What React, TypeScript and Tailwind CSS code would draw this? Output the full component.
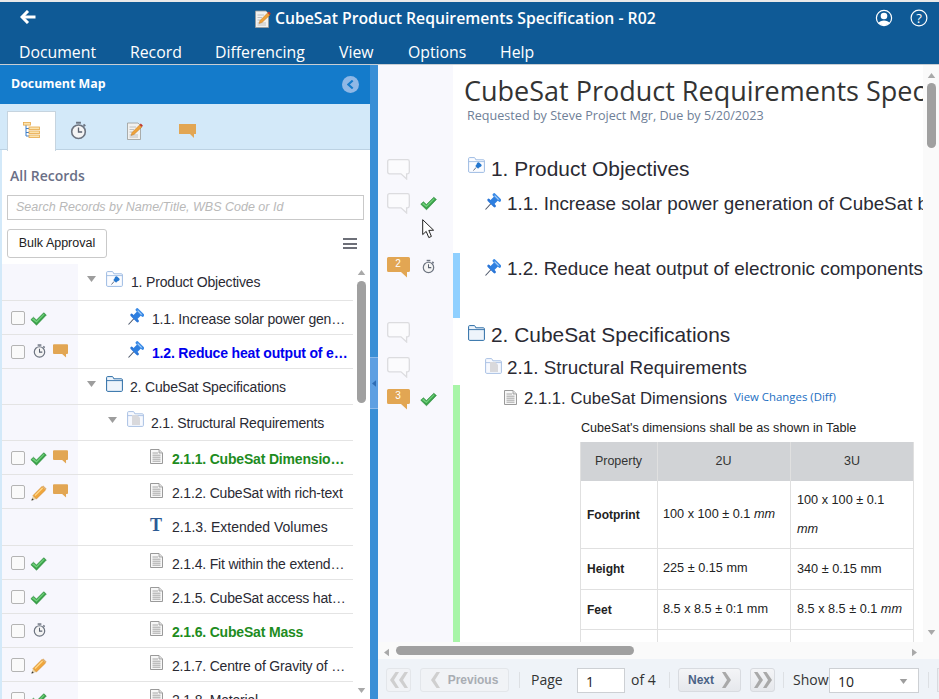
import React from "react";

const Check = ({ className = "" }: { className?: string }) => (
  <svg viewBox="0 0 18 15" className={className}>
    <path d="M0.8 8.2 L3.6 5.6 L6.8 8.6 L14.6 0.8 L17.4 3.2 L6.9 14.2 Z" fill="#3ba24a" stroke="#2b8a3c" strokeWidth="0.6" />
    <path d="M2 8 L3.6 6.6 L6.8 9.6 L14.6 2 L15.5 2.8 L6.9 11.5 Z" fill="#6fcf7a" />
  </svg>
);

const Stopwatch = ({ className = "" }: { className?: string }) => (
  <svg viewBox="0 0 14 15" className={className}>
    <rect x="5" y="0.3" width="4" height="1.6" fill="#6d7480" />
    <rect x="11" y="2.5" width="2" height="1.5" fill="#6d7480" transform="rotate(40 12 3)" />
    <circle cx="7" cy="8.5" r="5.6" fill="#f4f4f4" stroke="#6d7480" strokeWidth="1.3" />
    <path d="M7 5 V8.7 H10" fill="none" stroke="#5a6270" strokeWidth="1.1" />
  </svg>
);

const Comment = ({ className = "", n }: { className?: string; n?: string }) => (
  <div className={className}>
    <svg viewBox="0 0 23 21" className="absolute inset-0 w-full h-full">
      <path d="M1.5 0 H21.5 Q23 0 23 1.5 V13.5 Q23 15 21.5 15 H20 V20.5 L14 15 H1.5 Q0 15 0 13.5 V1.5 Q0 0 1.5 0 Z" fill="#e2a653" />
    </svg>
    {n && (
      <span className="absolute left-0 right-[1px] top-[1px] text-center text-[10px] leading-[12px] text-white">
        {n}
      </span>
    )}
  </div>
);

const EmptyComment = ({ className = "" }: { className?: string }) => (
  <svg viewBox="0 0 23 21" className={className}>
    <path d="M2.5 0.7 H20.5 Q22.3 0.7 22.3 2.5 V13 Q22.3 14.8 20.5 14.8 H19.6 V20 L14 14.8 H2.5 Q0.7 14.8 0.7 13 V2.5 Q0.7 0.7 2.5 0.7 Z" fill="#fbfbfd" stroke="#dcdcdf" strokeWidth="1.3" />
  </svg>
);

const Pin = ({ className = "" }: { className?: string }) => (
  <svg viewBox="0 0 16 17" className={className}>
    <path d="M0.5 16.5 L6 10.5" stroke="#4a5568" strokeWidth="1.1" />
    <path d="M3.6 7 L9.6 13" stroke="#2a75d6" strokeWidth="2.6" strokeLinecap="round" />
    <path d="M6 10.5 L11.5 5" stroke="#2e7fe0" strokeWidth="5.4" />
    <path d="M9.2 1.8 L14.6 7.2" stroke="#3a8ae6" strokeWidth="3.2" strokeLinecap="round" />
    <path d="M9.6 2.6 L13.6 6.6" stroke="#a5cdf7" strokeWidth="1.1" />
  </svg>
);

const FolderOutline = ({ className = "", color = "#2c6da6", fill = "#eef4fb" }: { className?: string; color?: string; fill?: string }) => (
  <svg viewBox="0 0 17 16" className={className}>
    <path d="M0.6 14 V1.6 Q0.6 0.6 1.6 0.6 H6 Q7 0.6 7.4 1.6 L7.8 2.8 H15.4 Q16.4 2.8 16.4 3.8 V14.4 Q16.4 15.4 15.4 15.4 H1.6 Q0.6 15.4 0.6 14 Z" fill={fill} stroke={color} strokeWidth="1" />
    <path d="M0.8 4.6 H16.2" stroke={color} strokeWidth="0.9" />
  </svg>
);

const PinFolder = ({ className = "" }: { className?: string }) => (
  <div className={className}>
    <FolderOutline className="absolute inset-0 w-full h-full" color="#9dbbe3" fill="#fbfcff" />
    <svg viewBox="0 0 10 10" className="absolute left-[5px] top-[5px] w-[9px] h-[9px]">
      <path d="M0.5 9.5 L3.5 6" stroke="#44526a" strokeWidth="0.9" />
      <path d="M4.5 1 C5.5 0 6.6 0 7.4 1 L9 2.6 C10 3.6 9.7 4.6 8.9 5 L6.5 6.4 L5.7 7.5 L2.5 4.4 L3.6 3.4 Z" fill="#2477cf" />
    </svg>
  </div>
);

const DocFolder = ({ className = "" }: { className?: string }) => (
  <div className={className}>
    <FolderOutline className="absolute inset-0 w-full h-full" color="#a9c1e4" fill="#f7f9fe" />
    <svg viewBox="0 0 9 11" className="absolute left-[5px] top-[4px] w-[8px] h-[10px]">
      <path d="M0 0 H6 L9 3 V11 H0 Z" fill="#d9d9dc" />
    </svg>
  </div>
);

const Doc = ({ className = "" }: { className?: string }) => (
  <svg viewBox="0 0 13 15" className={className}>
    <path d="M0.5 0.5 H9 L12.5 4 V14.5 H0.5 Z" fill="#f7f7f7" stroke="#9a9a9a" strokeWidth="1" />
    <path d="M9 0.5 V4 H12.5" fill="#dcdcdc" stroke="#9a9a9a" strokeWidth="0.8" />
    <path d="M2.5 4 H8 M2.5 6.2 H10.5 M2.5 8.2 H10.5 M2.5 10.2 H10.5 M2.5 12.2 H10.5" stroke="#9c9c9c" strokeWidth="0.9" />
  </svg>
);

const Pencil = ({ className = "" }: { className?: string }) => (
  <svg viewBox="0 0 16 16" className={className}>
    <path d="M0.4 15.6 L2 10.5 L5.4 14 Z" fill="#e8d3a8" />
    <path d="M0.4 15.6 L1.1 13.2 L2.8 14.9 Z" fill="#333" />
    <path d="M2 10.5 L11 1.4 L14.6 5 L5.4 14 Z" fill="#f0a63c" stroke="#c67f1e" strokeWidth="0.5" />
    <path d="M4 10.5 L11.6 3" stroke="#ffd98c" strokeWidth="1.2" />
    <path d="M11 1.4 L12.2 0.4 L15.6 3.8 L14.6 5 Z" fill="#e0b070" />
  </svg>
);

const NoteIcon = ({ className = "" }: { className?: string }) => (
  <svg viewBox="0 0 16 18" className={className}>
    <path d="M0.5 1 H11 L13.5 3.5 V17.5 H0.5 Z" fill="#f1f1ef" stroke="#9a9a98" strokeWidth="0.8" />
    <path d="M2.5 5 H9 M2.5 7.5 H7 M2.5 10 H5.5 M2.5 13 H11 M2.5 15 H11" stroke="#b5b5b5" strokeWidth="0.8" />
    <path d="M4 13.5 L5 10.5 L12.5 3 L15 5 L7 12.5 Z" fill="#eea23a" stroke="#b86f1a" strokeWidth="0.4" />
    <path d="M12.5 3 L13.8 1.6 L15.8 3.6 L15 5 Z" fill="#c0392b" />
  </svg>
);

const Tri = ({ className = "" }: { className?: string }) => (
  <svg viewBox="0 0 9 6" className={className}>
    <path d="M0 0 H9 L4.5 6 Z" fill="#9d9d9d" />
  </svg>
);

const Checkbox = () => (
  <div className="w-[14px] h-[14px] rounded-[2px] border border-[#b4b4b4] bg-[#fafafa] shrink-0" />
);

type Row = {
  top: number;
  h: number;
  text: string;
  textX: number;
  cb?: boolean;
  status?: "check" | "watch" | "pencil";
  comment?: boolean;
  tone?: "blue" | "green";
  icon: "pinfolder" | "folder" | "docfolder" | "pin" | "doc" | "t";
  iconX: number;
  iconY: number;
  arrowX?: number;
  wide?: boolean;
};

const rows: Row[] = [
  { top: 264, h: 37, text: "1. Product Objectives", textX: 131, icon: "pinfolder", iconX: 106, iconY: 7, arrowX: 87 },
  { top: 301, h: 34, text: "1.1. Increase solar power gen…", textX: 152, cb: true, status: "check", icon: "pin", iconX: 128, iconY: 7 },
  { top: 335, h: 34, text: "1.2. Reduce heat output of e…", textX: 152, cb: true, status: "watch", comment: true, tone: "blue", icon: "pin", iconX: 128, iconY: 6 },
  { top: 369, h: 36, text: "2. CubeSat Specifications", textX: 130, icon: "folder", iconX: 106, iconY: 7, arrowX: 87 },
  { top: 405, h: 36, text: "2.1. Structural Requirements", textX: 151, icon: "docfolder", iconX: 127, iconY: 6, arrowX: 108 },
  { top: 441, h: 34, text: "2.1.1. CubeSat Dimensio…", textX: 172, cb: true, status: "check", comment: true, tone: "green", icon: "doc", iconX: 150, iconY: 8 },
  { top: 475, h: 34, text: "2.1.2. CubeSat with rich-text", textX: 172, cb: true, status: "pencil", comment: true, icon: "doc", iconX: 150, iconY: 8 },
  { top: 509, h: 37, text: "2.1.3. Extended Volumes", textX: 172, icon: "t", iconX: 150, iconY: 8, wide: true },
  { top: 546, h: 34, text: "2.1.4. Fit within the extend…", textX: 172, cb: true, status: "check", icon: "doc", iconX: 150, iconY: 7 },
  { top: 580, h: 34, text: "2.1.5. CubeSat access hat…", textX: 172, cb: true, status: "check", icon: "doc", iconX: 150, iconY: 7 },
  { top: 614, h: 34, text: "2.1.6. CubeSat Mass", textX: 172, cb: true, status: "watch", tone: "green", icon: "doc", iconX: 150, iconY: 7 },
  { top: 648, h: 34, text: "2.1.7. Centre of Gravity of …", textX: 172, cb: true, status: "pencil", icon: "doc", iconX: 150, iconY: 7 },
  { top: 682, h: 34, text: "2.1.8. Material", textX: 172, cb: true, status: "check", icon: "doc", iconX: 150, iconY: 7 },
];

function TreeRow({ r }: { r: Row }) {
  const toneClass =
    r.tone === "blue" ? "font-bold text-[#0000ee]" : r.tone === "green" ? "font-bold text-[#1e8c1e]" : "text-[#2a2a33]";
  return (
    <div className="absolute left-[2px] w-[351px] border-b border-[#e4e4e4] bg-white" style={{ top: r.top, height: r.h }}>
      <div className="absolute left-0 top-0 bottom-0 w-[76px] bg-[#f7f7fd]" />
      {r.cb && (
        <div className="absolute left-[9px] top-[10px]">
          <Checkbox />
        </div>
      )}
      {r.status === "check" && <Check className="absolute left-[28px] top-[11px] w-[17px] h-[14px]" />}
      {r.status === "watch" && <Stopwatch className="absolute left-[31px] top-[9px] w-[13px] h-[14px]" />}
      {r.status === "pencil" && <Pencil className="absolute left-[29px] top-[10px] w-[16px] h-[16px]" />}
      {r.comment && <Comment className="absolute left-[51px] top-[9px] w-[15px] h-[14px]" />}
      {r.arrowX !== undefined && (
        <div className="absolute top-[12px]" style={{ left: r.arrowX - 2 }}>
          <Tri className="block w-[9px] h-[6px]" />
        </div>
      )}
      <div className="absolute" style={{ left: r.iconX - 2, top: r.iconY }}>
        {r.icon === "pinfolder" && <PinFolder className="relative w-[17px] h-[16px]" />}
        {r.icon === "folder" && <FolderOutline className="w-[17px] h-[16px]" />}
        {r.icon === "docfolder" && <DocFolder className="relative w-[17px] h-[16px]" />}
        {r.icon === "pin" && <Pin className="w-[16px] h-[17px]" />}
        {r.icon === "doc" && <Doc className="w-[13px] h-[15px]" />}
        {r.icon === "t" && (
          <span className="block w-[13px] text-[18px] leading-[17px] font-bold text-[#2c5a94] font-[Liberation_Serif,serif]">T</span>
        )}
      </div>
      <span
        className={`absolute top-[10px] text-[14px] leading-[17px] whitespace-nowrap ${r.wide ? "" : "tracking-[-0.18px]"} ${toneClass}`}
        style={{ left: r.textX - 2 }}
      >
        {r.text}
      </span>
    </div>
  );
}

const menu = [
  ["Document", 19],
  ["Record", 130],
  ["Differencing", 215],
  ["View", 339],
  ["Options", 408],
  ["Help", 500],
] as const;

const tableRows = [
  { top: 481, h: 68, a: "Footprint", b: <>100 x 100 ± 0.1 <i>mm</i></>, c: <>100 x 100 ± 0.1<br /><i>mm</i></> },
  { top: 549, h: 41, a: "Height", b: <>225 ± 0.15 mm</>, c: <>340 ± 0.15 mm</> },
  { top: 590, h: 40, a: "Feet", b: <>8.5 x 8.5 ± 0:1 mm</>, c: <>8.5 x 8.5 ± 0.1 <i>mm</i></> },
];

const NavBtn = ({ className = "", children, dim }: { className?: string; children: React.ReactNode; dim?: boolean }) => (
  <div
    className={`absolute top-[668px] h-[24px] rounded-[3px] border flex items-center justify-center ${
      dim ? "border-[#e3e6ea] bg-[#f1f3f6]" : "border-[#d8dbe0] bg-gradient-to-b from-[#f4f5f7] to-[#e6e8ec]"
    } ${className}`}
  >
    {children}
  </div>
);

const Chev = ({ dir, double, color, className = "" }: { dir: "l" | "r"; double?: boolean; color: string; className?: string }) => (
  <svg viewBox={double ? "0 0 20 16" : "0 0 10 16"} className={className}>
    <g transform={dir === "l" ? (double ? "translate(20 0) scale(-1 1)" : "translate(10 0) scale(-1 1)") : undefined}>
      <path d="M1 0 H4.5 L10 8 L4.5 16 H1 L6 8 Z" fill={color} />
      {double && <path d="M10 0 H13.5 L19 8 L13.5 16 H10 L15 8 Z" fill={color} />}
    </g>
  </svg>
);

export default function App() {
  return (
    <div className="relative w-[939px] h-[699px] overflow-hidden bg-white font-[Liberation_Sans,Arial,sans-serif]">
      {/* Header */}
      <div className="absolute left-0 top-0 w-full h-[65px] bg-[#0f5a96] border-t-2 border-t-[#e9e9e9] border-b border-b-[#c9ced3] font-[Open_Sans,sans-serif] text-white">
        <svg viewBox="0 0 16 14" className="absolute left-[20px] top-[8px] w-[16px] h-[14px]">
          <path d="M2 7 H15.5" stroke="#fff" strokeWidth="3" />
          <path d="M8 1 L2 7 L8 13" stroke="#fff" strokeWidth="3" fill="none" />
        </svg>
        <NoteIcon className="absolute left-[255px] top-[8px] w-[16px] h-[18px]" />
        <span className="absolute left-[275px] top-[5px] text-[15.75px] leading-[22px] font-semibold whitespace-nowrap">
          CubeSat Product Requirements Specification - R02
        </span>
        <svg viewBox="0 0 18 18" className="absolute left-[875px] top-[7px] w-[18px] h-[18px]">
          <circle cx="9" cy="9" r="7.6" fill="none" stroke="#fff" strokeWidth="1.2" />
          <circle cx="9" cy="7" r="3.3" fill="#fff" />
          <path d="M3.4 14 C5 10.5 13 10.5 14.6 14 C12 17 6 17 3.4 14 Z" fill="#fff" />
        </svg>
        <svg viewBox="0 0 18 18" className="absolute left-[910px] top-[7px] w-[18px] h-[18px]">
          <circle cx="9" cy="9" r="7.9" fill="none" stroke="#fff" strokeWidth="1.2" />
          <text x="9" y="13.5" textAnchor="middle" fontSize="13" fill="#fff" fontFamily="Open Sans">?</text>
        </svg>
        {menu.map(([t, x]) => (
          <span key={t} className="absolute top-[38px] text-[15.8px] leading-[24px] whitespace-nowrap" style={{ left: x }}>
            {t}
          </span>
        ))}
      </div>

      {/* Left panel */}
      <div className="absolute left-0 top-[65px] w-[370px] h-[39px] bg-[#147bcb] flex items-center justify-between pl-[11px] pr-[11px]">
        <span className="text-[12.4px] font-bold text-white font-[Open_Sans,sans-serif]">Document Map</span>
        <div className="w-[17px] h-[17px] rounded-full bg-[#8fb8e6] flex items-center justify-center">
          <svg viewBox="0 0 8 10" className="w-[7px] h-[9px]">
            <path d="M6.5 0.5 L1.5 5 L6.5 9.5" fill="none" stroke="#147bcb" strokeWidth="2.4" />
          </svg>
        </div>
      </div>
      <div className="absolute left-0 top-[104px] w-[370px] h-[46px] bg-[#d3e9f9] border-b border-[#bcd2e3]" />
      <div className="absolute left-0 top-[150px] bottom-0 w-[2px] bg-[#d3e9f9]" />
      <div className="absolute left-[7px] top-[111px] w-[49px] h-[40px] bg-white border border-b-0 border-[#c6d4df]" />
      <svg viewBox="0 0 17 17" className="absolute left-[23px] top-[122px] w-[17px] h-[17px]">
        <path d="M3 2 V14 H6 M3 6.5 H6 M3 10.5 H6" fill="none" stroke="#3a7cc9" strokeWidth="1" />
        <rect x="0.5" y="0.5" width="7" height="2.6" fill="#fbe3ae" stroke="#e6a84a" strokeWidth="0.8" />
        <rect x="6" y="5" width="10.5" height="2.6" fill="#fbe3ae" stroke="#e6a84a" strokeWidth="0.8" />
        <rect x="6" y="9" width="10.5" height="2.6" fill="#fbe3ae" stroke="#e6a84a" strokeWidth="0.8" />
        <rect x="6" y="13" width="10.5" height="2.6" fill="#fbe3ae" stroke="#e6a84a" strokeWidth="0.8" />
      </svg>
      <Stopwatch className="absolute left-[70px] top-[121px] w-[17px] h-[19px]" />
      <NoteIcon className="absolute left-[127px] top-[122px] w-[16px] h-[18px]" />
      <svg viewBox="0 0 17 14" className="absolute left-[179px] top-[124px] w-[17px] h-[14px]">
        <path d="M0 0 H17 V10 H15 V14 L11 10 H0 Z" fill="#e2a653" />
      </svg>

      <span className="absolute left-[10px] top-[167px] text-[14px] leading-[18px] font-semibold text-[#6a6f86] font-[Open_Sans,sans-serif]">
        All Records
      </span>
      <div className="absolute left-[7px] top-[195px] w-[357px] h-[25px] border border-[#c9c9c9] pl-[8px] flex items-center">
        <span className="text-[12.5px] italic text-[#b9b9b9] whitespace-nowrap">Search Records by Name/Title, WBS Code or Id</span>
      </div>
      <div className="absolute left-[7px] top-[229px] w-[100px] h-[29px] border border-[#c9c9c9] rounded-[3px] flex items-center justify-center text-[12.5px] text-[#222]">
        Bulk Approval
      </div>
      <div className="absolute left-[343px] top-[238px] w-[14px] flex flex-col gap-[2.5px]">
        <div className="h-[2px] bg-[#6d6f78]" />
        <div className="h-[2px] bg-[#6d6f78]" />
        <div className="h-[2px] bg-[#6d6f78]" />
      </div>

      {rows.map((r) => (
        <TreeRow key={r.text} r={r} />
      ))}

      {/* Tree scrollbar */}
      <div className="absolute left-[353px] top-[264px] w-[17px] h-[435px] bg-white" />
      <svg viewBox="0 0 9 6" className="absolute left-[357px] top-[270px] w-[9px] h-[5px]">
        <path d="M0 6 H9 L4.5 0 Z" fill="#a9a9a9" />
      </svg>
      <div className="absolute left-[357px] top-[281px] w-[9px] h-[122px] rounded-[5px] bg-[#a0a0a0]" />
      <svg viewBox="0 0 9 6" className="absolute left-[357px] top-[688px] w-[9px] h-[5px]">
        <path d="M0 0 H9 L4.5 6 Z" fill="#a9a9a9" />
      </svg>

      {/* Splitter */}
      <div className="absolute left-[370px] top-[65px] w-[8px] h-[634px] bg-[#3a8fd6]" />
      <div className="absolute left-[370px] top-[357px] w-[8px] h-[52px] bg-[#5e9fe2] border-y border-[#8db9ea] flex items-center justify-center">
        <svg viewBox="0 0 5 8" className="w-[4px] h-[7px]">
          <path d="M5 0 V8 L0 4 Z" fill="#2f6db5" />
        </svg>
      </div>

      {/* Doc gutter */}
      <div className="absolute left-[378px] top-[65px] w-[75px] h-[577px] bg-[#f8f8fd]" />
      <div className="absolute left-[453px] top-[253px] w-[7px] h-[65px] bg-[#90d0ff]" />
      <div className="absolute left-[453px] top-[385px] w-[7px] h-[257px] bg-[#a8f5a8]" />

      <EmptyComment className="absolute left-[387px] top-[159px] w-[23px] h-[21px]" />
      <EmptyComment className="absolute left-[387px] top-[193px] w-[23px] h-[21px]" />
      <Comment className="absolute left-[387px] top-[257px] w-[23px] h-[21px]" n="2" />
      <EmptyComment className="absolute left-[387px] top-[322px] w-[23px] h-[21px]" />
      <EmptyComment className="absolute left-[387px] top-[357px] w-[23px] h-[21px]" />
      <Comment className="absolute left-[387px] top-[389px] w-[23px] h-[21px]" n="3" />
      <Check className="absolute left-[420px] top-[196px] w-[17px] h-[15px]" />
      <Stopwatch className="absolute left-[422px] top-[259px] w-[13px] h-[15px]" />
      <Check className="absolute left-[420px] top-[392px] w-[17px] h-[15px]" />
      <svg viewBox="0 0 13 20" className="absolute left-[422px] top-[219px] w-[13px] h-[20px]">
        <path d="M0.7 0.7 V15.6 L4.2 12.4 L6.8 18.6 L9.4 17.4 L6.8 11.4 L11.6 11.2 Z" fill="#fff" stroke="#222" strokeWidth="1" />
      </svg>

      {/* Doc content */}
      <div className="absolute left-[460px] top-[65px] w-[463px] h-[577px] overflow-hidden">
        <span className="absolute left-[4px] top-[10px] text-[27px] leading-[32px] whitespace-nowrap text-[#333] font-[Open_Sans,sans-serif]">
          CubeSat Product Requirements Specification
        </span>
        <span className="absolute left-[7px] top-[43px] text-[12.6px] leading-[16px] text-[#6f8097] whitespace-nowrap font-[Open_Sans,sans-serif]">
          Requested by Steve Project Mgr, Due by 5/20/2023
        </span>
        <PinFolder className="absolute left-[8px] top-[92px] w-[17px] h-[16px]" />
        <span className="absolute left-[31px] top-[92px] text-[20.9px] leading-[24px] whitespace-nowrap text-[#2a2a33]">1. Product Objectives</span>
        <Pin className="absolute left-[25px] top-[128px] w-[16px] h-[17px]" />
        <span className="absolute left-[47px] top-[127px] text-[18.85px] leading-[24px] whitespace-nowrap text-[#2a2a33]">1.1. Increase solar power generation of CubeSat by 10 percent</span>
        <Pin className="absolute left-[25px] top-[194px] w-[16px] h-[17px]" />
        <span className="absolute left-[47px] top-[192px] text-[18.85px] leading-[24px] whitespace-nowrap text-[#2a2a33]">1.2. Reduce heat output of electronic components</span>
        <FolderOutline className="absolute left-[8px] top-[260px] w-[17px] h-[16px]" />
        <span className="absolute left-[31px] top-[258px] text-[20.9px] leading-[24px] whitespace-nowrap text-[#2a2a33]">2. CubeSat Specifications</span>
        <DocFolder className="absolute left-[25px] top-[293px] w-[17px] h-[16px]" />
        <span className="absolute left-[47px] top-[291px] text-[18.85px] leading-[24px] whitespace-nowrap text-[#2a2a33]">2.1. Structural Requirements</span>
        <Doc className="absolute left-[44px] top-[325px] w-[13px] h-[15px]" />
        <span className="absolute left-[64px] top-[324px] text-[16.7px] leading-[20px] whitespace-nowrap text-[#2a2a33]">2.1.1. CubeSat Dimensions</span>
        <span className="absolute left-[274px] top-[324px] text-[11.4px] leading-[16px] whitespace-nowrap text-[#1b6ec2] font-[Open_Sans,sans-serif]">View Changes (Diff)</span>
        <span className="absolute left-[121px] top-[355px] text-[12.6px] leading-[16px] whitespace-nowrap text-[#222]">CubeSat's dimensions shall be as shown in Table</span>
      </div>

      {/* Table */}
      <div className="absolute left-[580px] top-[442px] w-[334px] h-[39px] bg-[#d1d3d6] flex text-[12.5px] text-[#333] items-center text-center">
        <span className="w-[77px]">Property</span>
        <span className="w-[133px]">2U</span>
        <span className="w-[124px]">3U</span>
      </div>
      <div className="absolute left-[580px] top-[442px] w-[334px] h-[200px] overflow-hidden pointer-events-none">
        <div className="absolute left-[77px] top-0 bottom-0 w-px bg-[#e0e0e0]" />
        <div className="absolute left-[210px] top-0 bottom-0 w-px bg-[#e0e0e0]" />
        <div className="absolute left-[333px] top-0 bottom-0 w-px bg-[#e0e0e0]" />
      </div>
      {tableRows.map((t, i) => (
        <div
          key={i}
          className="absolute left-[580px] w-[334px] border-b border-[#e0e0e0] text-[12.7px] text-[#222] flex items-center"
          style={{ top: t.top, height: t.h }}
        >
          <span className="w-[77px] pl-[7px] font-bold text-[12px]">{t.a}</span>
          <span className="w-[133px] pl-[6px]">{t.b}</span>
          <span className="w-[124px] pl-[7px] leading-[29px]">{t.c}</span>
        </div>
      ))}
      <div className="absolute left-[580px] top-[442px] w-px h-[200px] bg-[#e0e0e0]" />

      {/* Right scrollbar */}
      <div className="absolute left-[923px] top-[65px] w-[16px] h-[577px] bg-[#fafafa]" />
      <svg viewBox="0 0 9 6" className="absolute left-[927px] top-[73px] w-[9px] h-[5px]">
        <path d="M0 6 H9 L4.5 0 Z" fill="#a9a9a9" />
      </svg>
      <div className="absolute left-[927px] top-[83px] w-[9px] h-[65px] rounded-[5px] bg-[#a0a0a0]" />
      <svg viewBox="0 0 9 6" className="absolute left-[927px] top-[630px] w-[9px] h-[5px]">
        <path d="M0 0 H9 L4.5 6 Z" fill="#a9a9a9" />
      </svg>

      {/* Horizontal scrollbar */}
      <div className="absolute left-[378px] top-[642px] w-[561px] h-[17px] bg-[#fafafa]" />
      <svg viewBox="0 0 6 9" className="absolute left-[384px] top-[648px] w-[5px] h-[9px]">
        <path d="M6 0 V9 L0 4.5 Z" fill="#a9a9a9" />
      </svg>
      <div className="absolute left-[396px] top-[646px] w-[238px] h-[9px] rounded-[5px] bg-[#a0a0a0]" />
      <svg viewBox="0 0 6 9" className="absolute left-[912px] top-[648px] w-[5px] h-[9px]">
        <path d="M0 0 V9 L6 4.5 Z" fill="#a9a9a9" />
      </svg>

      {/* Footer */}
      <div className="absolute left-[378px] top-[659px] w-[561px] h-[40px] bg-[#eff3f8]" />
      <NavBtn dim className="left-[386px] w-[25px]">
        <Chev dir="l" double color="#cfcfcf" className="w-[20px] h-[16px]" />
      </NavBtn>
      <NavBtn dim className="left-[420px] w-[89px] gap-[7px] text-[12px] font-bold text-[#a9adb3]">
        <Chev dir="l" color="#cfcfcf" className="w-[10px] h-[16px]" />
        <span>Previous</span>
      </NavBtn>
      <div className="absolute left-[519px] top-[672px] w-px h-[16px] bg-[#dde0e4]" />
      <span className="absolute left-[531px] top-[670px] text-[14px] leading-[20px] text-[#333] font-[Open_Sans,sans-serif]">Page</span>
      <div className="absolute left-[577px] top-[668px] w-[48px] h-[25px] bg-white border border-[#cdd0d4] pl-[8px] text-[14px] leading-[25px] text-[#222] font-[Open_Sans,sans-serif]">1</div>
      <span className="absolute left-[631px] top-[670px] text-[14px] leading-[20px] text-[#333] font-[Open_Sans,sans-serif]">of 4</span>
      <div className="absolute left-[669px] top-[672px] w-px h-[16px] bg-[#dde0e4]" />
      <NavBtn className="left-[678px] w-[63px] gap-[7px] text-[12px] font-bold text-[#4a6285]">
        <span>Next</span>
        <Chev dir="r" color="#a9a9a9" className="w-[10px] h-[16px]" />
      </NavBtn>
      <NavBtn className="left-[750px] w-[25px]">
        <Chev dir="r" double color="#a9a9a9" className="w-[20px] h-[16px]" />
      </NavBtn>
      <div className="absolute left-[783px] top-[672px] w-px h-[16px] bg-[#dde0e4]" />
      <span className="absolute left-[793px] top-[670px] text-[14px] leading-[20px] text-[#333] font-[Open_Sans,sans-serif]">Show</span>
      <div className="absolute left-[829px] top-[668px] w-[90px] h-[25px] bg-white border border-[#cdd0d4] pl-[8px] text-[14px] leading-[25px] text-[#222] font-[Open_Sans,sans-serif]">
        10
        <svg viewBox="0 0 9 6" className="absolute right-[10px] top-[10px] w-[9px] h-[5px]">
          <path d="M0 0 H9 L4.5 6 Z" fill="#9d9d9d" />
        </svg>
      </div>
      <div className="absolute left-[928px] top-[672px] w-px h-[16px] bg-[#dde0e4]" />
      <div className="absolute left-[937px] top-[668px] w-[3px] h-[24px] border border-[#d8dbe0] bg-[#eceef1]" />
    </div>
  );
}
